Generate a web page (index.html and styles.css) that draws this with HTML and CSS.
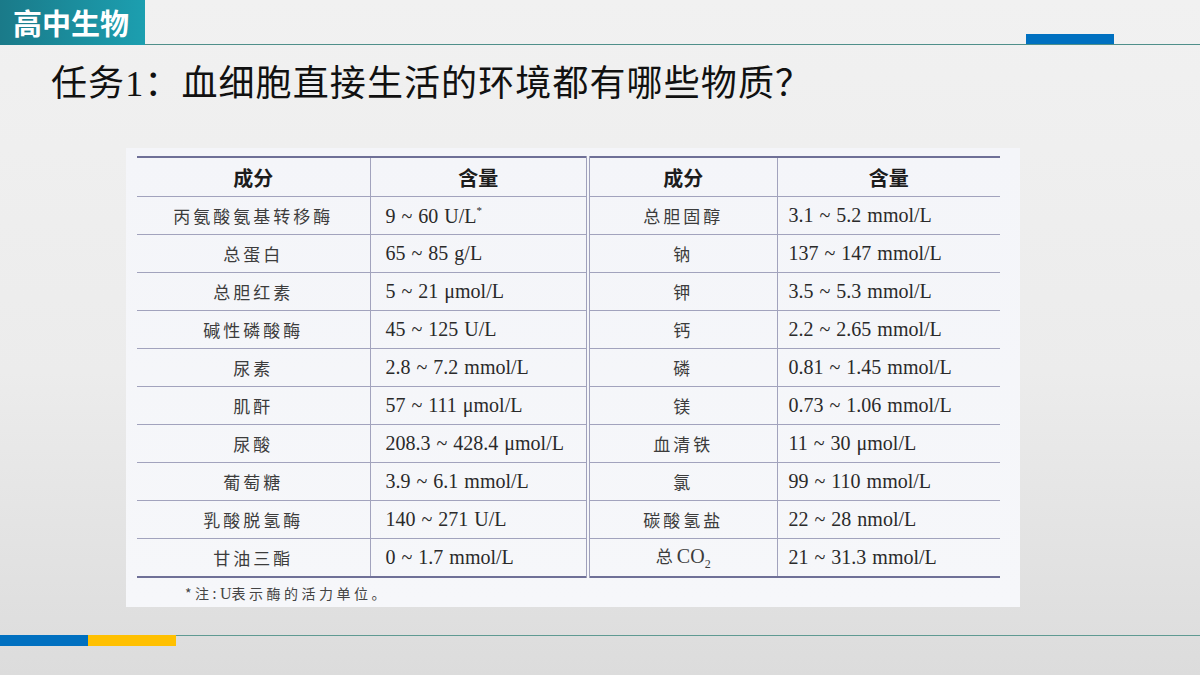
FILE: index.html
```html
<!DOCTYPE html>
<html lang="zh-CN">
<head>
<meta charset="utf-8">
<title>高中生物</title>
<link rel="stylesheet" href="styles.css">
</head>
<body>
<div class="slide">
  <header class="top">
    <div class="badge">高中生物</div>
    <div class="rule"><span class="accent"></span></div>
  </header>
  <h1 class="title">任务<span class="num">1</span>：血细胞直接生活的环境都有哪些物质？</h1>
  <div class="figure">
    <table class="data">
      <colgroup>
        <col class="c1"><col class="c2"><col class="c3"><col class="c4">
      </colgroup>
      <thead>
        <tr><th>成分</th><th class="split">含量</th><th>成分</th><th>含量</th></tr>
      </thead>
      <tbody>
        <tr><td class="nm">丙氨酸氨基转移酶</td><td class="val split">9 ~ 60 U/L<sup>*</sup></td><td class="nm">总胆固醇</td><td class="val">3.1 ~ 5.2 mmol/L</td></tr>
        <tr><td class="nm">总蛋白</td><td class="val split">65 ~ 85 g/L</td><td class="nm">钠</td><td class="val">137 ~ 147 mmol/L</td></tr>
        <tr><td class="nm">总胆红素</td><td class="val split">5 ~ 21 μmol/L</td><td class="nm">钾</td><td class="val">3.5 ~ 5.3 mmol/L</td></tr>
        <tr><td class="nm">碱性磷酸酶</td><td class="val split">45 ~ 125 U/L</td><td class="nm">钙</td><td class="val">2.2 ~ 2.65 mmol/L</td></tr>
        <tr><td class="nm">尿素</td><td class="val split">2.8 ~ 7.2 mmol/L</td><td class="nm">磷</td><td class="val">0.81 ~ 1.45 mmol/L</td></tr>
        <tr><td class="nm">肌酐</td><td class="val split">57 ~ 111 μmol/L</td><td class="nm">镁</td><td class="val">0.73 ~ 1.06 mmol/L</td></tr>
        <tr><td class="nm">尿酸</td><td class="val split">208.3 ~ 428.4 μmol/L</td><td class="nm">血清铁</td><td class="val">11 ~ 30 μmol/L</td></tr>
        <tr><td class="nm">葡萄糖</td><td class="val split">3.9 ~ 6.1 mmol/L</td><td class="nm">氯</td><td class="val">99 ~ 110 mmol/L</td></tr>
        <tr><td class="nm">乳酸脱氢酶</td><td class="val split">140 ~ 271 U/L</td><td class="nm">碳酸氢盐</td><td class="val">22 ~ 28 nmol/L</td></tr>
        <tr><td class="nm">甘油三酯</td><td class="val split">0 ~ 1.7 mmol/L</td><td class="nm">总<span class="latin co2">CO<sub>2</sub></span></td><td class="val">21 ~ 31.3 mmol/L</td></tr>
      </tbody>
    </table>
    <p class="note">*注:<span class="latin">U</span>表示酶的活力单位。</p>
  </div>
  <footer class="bottom">
    <span class="bar blue"></span><span class="bar yellow"></span><span class="line"></span>
  </footer>
</div>
</body>
</html>
```
FILE: styles.css
```css
html, body {
  margin: 0;
  padding: 0;
}
body {
  background: #e6e6e6;
}
.slide {
  width: 1200px;
  height: 675px;
  overflow: hidden;
  background: linear-gradient(to bottom, #f1f1f1 0%, #ececec 55%, #dcdcdc 100%);
  font-family: "Noto Sans CJK SC", "Noto Sans", sans-serif;
}
.top {
  display: flex;
  height: 45px;
}
.badge {
  width: 145px;
  height: 45px;
  box-sizing: border-box;
  background: linear-gradient(to right, #1a7a89, #1c9fb0);
  color: #ffffff;
  font-weight: bold;
  font-size: 29px;
  line-height: 45px;
  padding-left: 13px;
}
.rule {
  flex: 1;
  display: flex;
  justify-content: flex-end;
  align-items: flex-end;
  border-bottom: 1px solid #4f8f8a;
  box-sizing: border-box;
  padding-right: 86px;
}
.accent {
  display: block;
  width: 88px;
  height: 10px;
  background: #0070c0;
}
.title {
  margin: 13px 0 0 51px;
  height: 45px;
  font-family: "Noto Sans CJK SC", sans-serif;
  font-weight: normal;
  font-size: 36px;
  line-height: 45px;
  color: #111111;
  letter-spacing: 1.1px;
}
.title .num {
  font-family: "Liberation Serif", serif;
}
.figure {
  margin: 45px 0 0 126px;
  width: 894px;
  height: 459px;
  box-sizing: border-box;
  padding: 8px 0 0 11px;
  background: linear-gradient(to bottom, #f4f5f9, #f6f7fa);
}
.data {
  border-collapse: collapse;
  width: 863px;
  table-layout: fixed;
  border-top: 2px solid #6f7097;
  border-bottom: 2px solid #6f7097;
}
.c1 { width: 233px; }
.c2 { width: 218px; }
.c3 { width: 189px; }
.c4 { width: 223px; }
.data th, .data td {
  border-top: 1px solid #a2a3bd;
  border-left: 1px solid #a2a3bd;
  padding: 0;
  white-space: nowrap;
}
.data th:first-child, .data td:first-child {
  border-left: none;
}
.data .split {
  border-right: 4px double #9fa0bb;
}
.data th {
  height: 38px;
  font-family: "Noto Sans CJK SC", sans-serif;
  font-size: 20px;
  font-weight: bold;
  color: #1c1c1c;
  text-align: center;
}
.data td {
  height: 37px;
}
.nm {
  text-align: center;
  font-family: "Noto Sans CJK SC", sans-serif;
  font-size: 17px;
  color: #3c3c3c;
  letter-spacing: 3px;
}
.latin {
  font-family: "Liberation Serif", serif;
  font-size: 20px;
  letter-spacing: 0;
}
.co2 {
  margin-left: 1px;
}
.latin sub {
  font-size: 12px;
}
.val {
  font-family: "Liberation Serif", serif;
  font-size: 20px;
  color: #2a2a2a;
  padding-left: 15px !important;
  word-spacing: 1px;
}
.data td.val:last-child {
  padding-left: 11px !important;
}
.val sup {
  font-size: 11px;
  vertical-align: 9px;
}
.note {
  margin: 5px 0 0 48px;
  font-family: "Noto Sans CJK SC", sans-serif;
  font-size: 14px;
  line-height: 20px;
  color: #444444;
  letter-spacing: 3.5px;
}
.note .latin {
  font-size: 16px;
}
.bottom {
  display: flex;
  margin-top: 28px;
  height: 11px;
}
.bar {
  display: block;
  width: 88px;
  height: 11px;
}
.blue { background: #0070c0; }
.yellow { background: #ffc000; }
.line {
  flex: 1;
  border-top: 1px solid #5f9a92;
}
```
